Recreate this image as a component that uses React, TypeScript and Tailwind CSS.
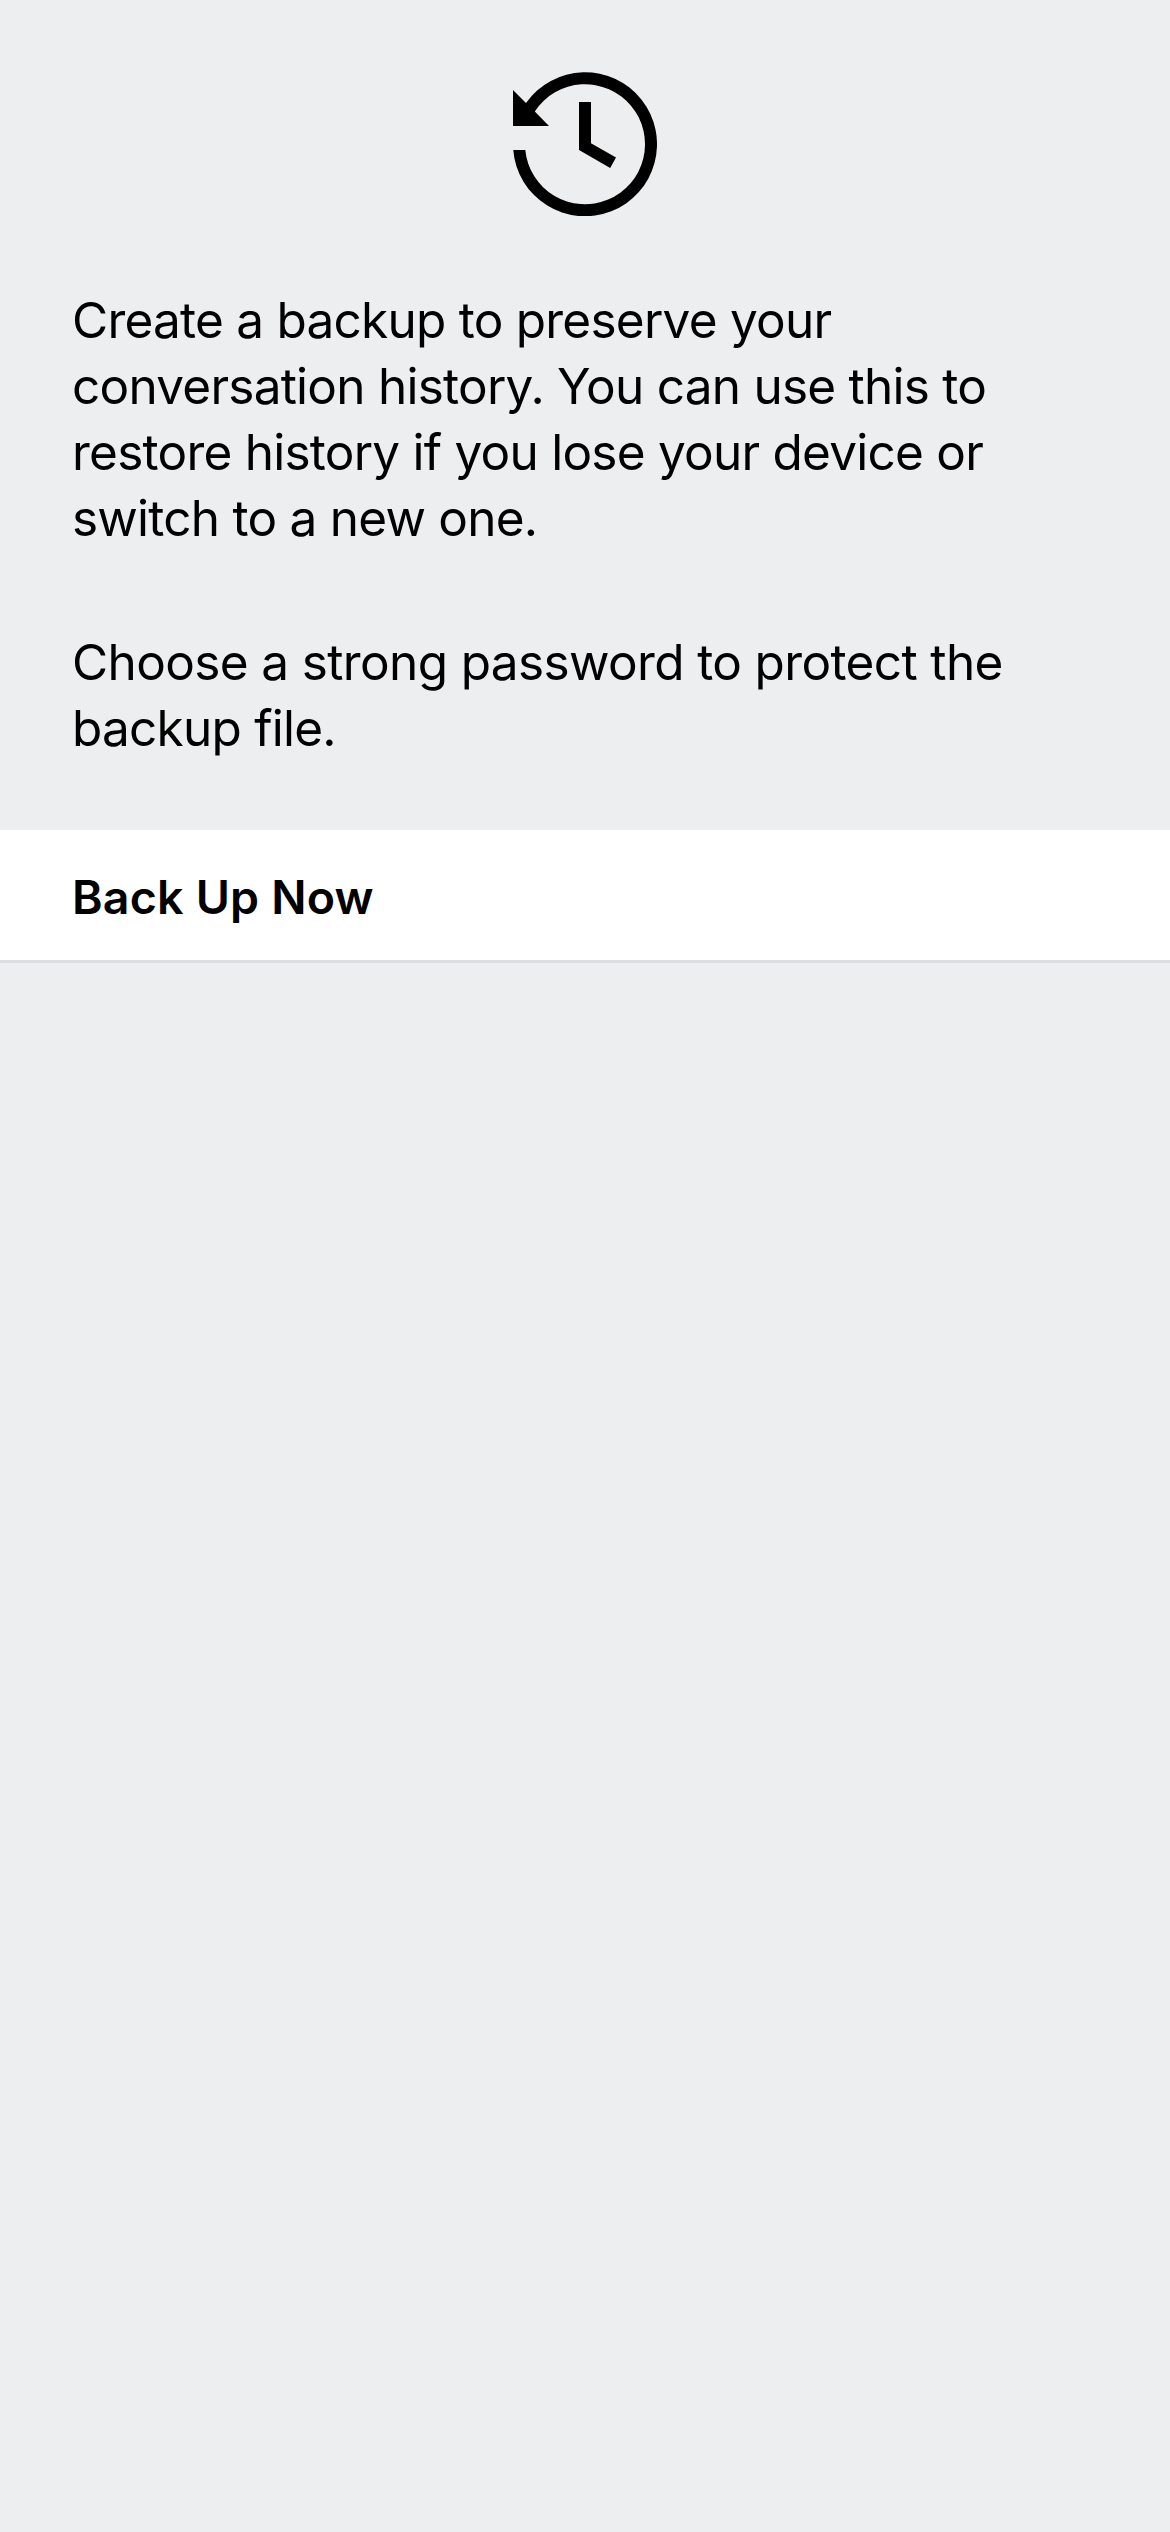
function HistoryIcon() {
  return (
    <svg viewBox="0 0 144 144" className="size-36" fill="currentColor" aria-hidden="true">
      <path d="M0 18L13 31A72 72 0 1 1 0.25 78H12.3A60 60 0 1 0 21.8 39.4L36 54H0Z" />
      <path d="M66 30H78V71.2L103 85.5L97.2 96L66 78Z" />
    </svg>
  );
}

export default function App() {
  return (
    <main className="min-h-[2532px] w-full bg-[#edeef0] font-['Inter',sans-serif] text-black">
      <header className="flex justify-center pt-[72px]">
        <HistoryIcon />
      </header>
      <section className="flex flex-col gap-[78px] whitespace-nowrap pl-[72px] pt-[71px] text-[49.5px] leading-[66px] tracking-[-0.76px]">
        <p>
          Create a backup to preserve your
          <br />
          conversation history. You can use this to
          <br />
          restore history if you lose your device or
          <br />
          switch to a new one.
        </p>
        <p>
          <span className="tracking-[-0.63px]">Choose a strong password to protect the</span>
          <br />
          backup file.
        </p>
      </section>
      <button className="mt-[69px] block h-[133px] w-full border-b-[3px] border-[#dcdde0] bg-white pl-[72px] pt-1 text-left text-[46.5px] font-semibold leading-[66px] tracking-[0.2px]">
        Back Up Now
      </button>
    </main>
  );
}
